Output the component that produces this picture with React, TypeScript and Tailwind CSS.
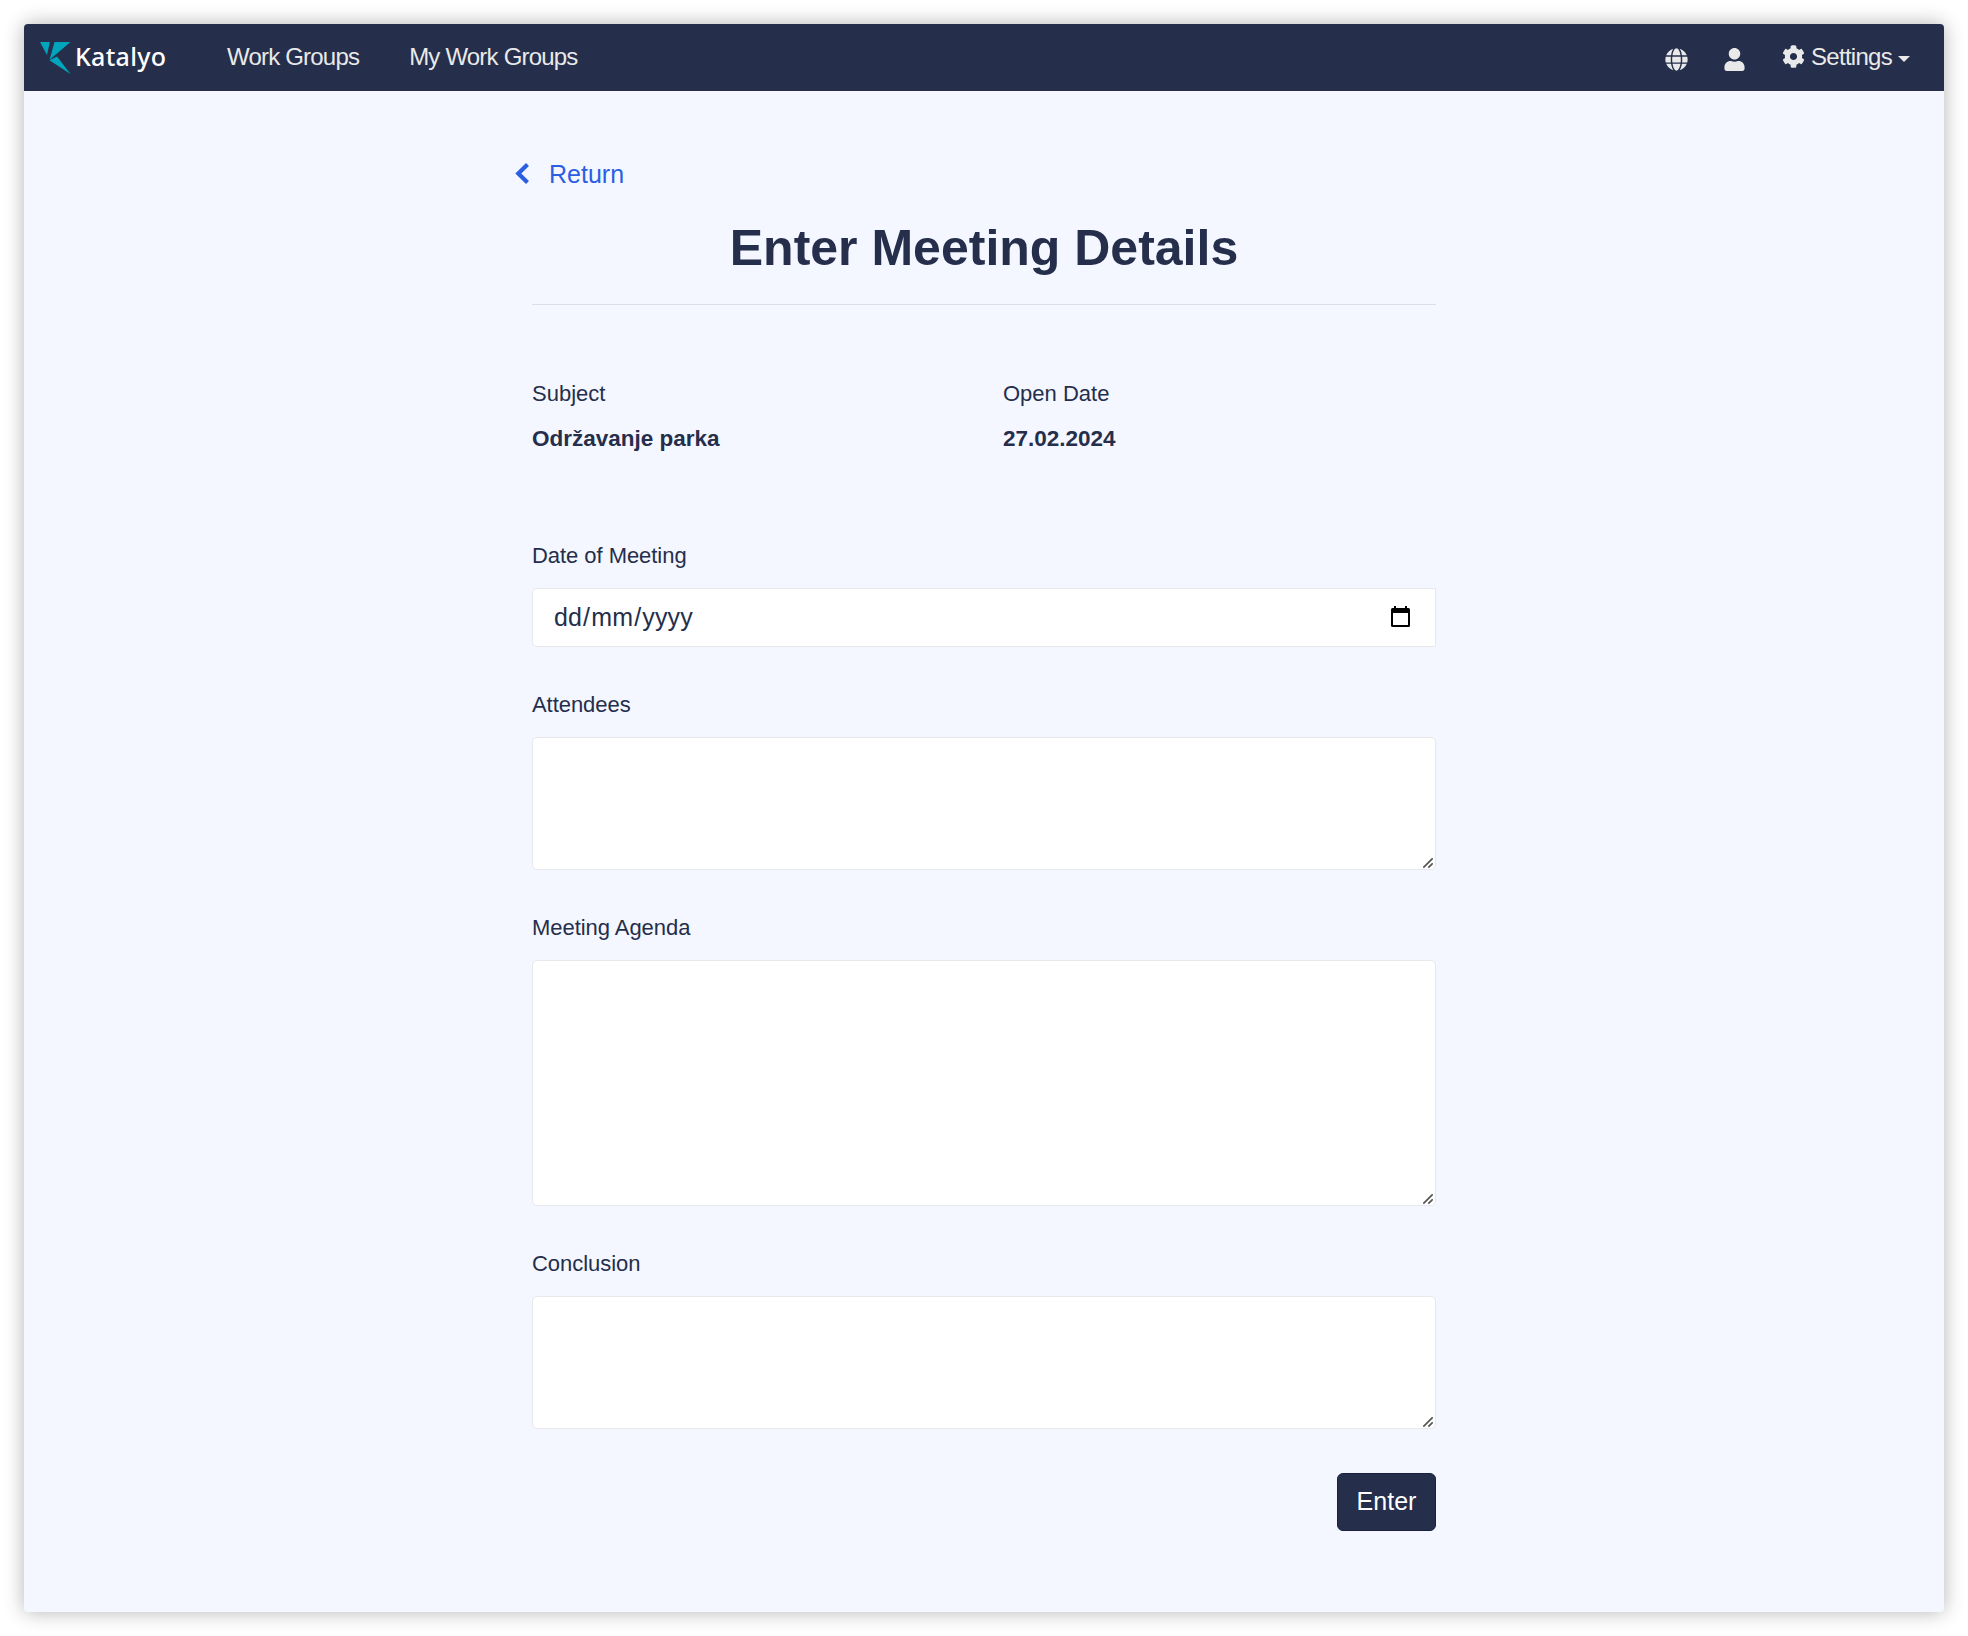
import React from "react";
import { FaGlobe, FaUser, FaCog } from "react-icons/fa";

function Grip() {
  return (
    <svg className="pointer-events-none absolute right-[3px] bottom-[2px] h-[10px] w-[10px]" viewBox="0 0 10 10" fill="none" stroke="#555" strokeWidth="1.7">
      <path d="M0.3 9.7 L9.7 0.3 M5.3 9.7 L9.7 5.3" />
    </svg>
  );
}

function Label({ children }: { children: React.ReactNode }) {
  return <label className="block text-[22px] leading-[33px] tracking-[-0.05px]">{children}</label>;
}

function AreaField({ label, size }: { label: string; size: string }) {
  return (
    <div className="flex flex-col gap-4">
      <Label>{label}</Label>
      <div className="relative flex">
        <textarea aria-label={label} className={`w-full resize-none rounded-[5px] border border-[#e7e8ec] bg-white outline-none ${size}`} />
        <Grip />
      </div>
    </div>
  );
}

function Logo() {
  return (
    <div className="flex items-center">
      <svg className="h-8 w-[31px]" viewBox="0 0 31 32" fill="#00a5bd">
        <path d="M0 0H9.8L7 13Z" />
        <path d="M14.5 0H30.5L9.600 17.800Z" />
        <path d="M9.400 18.200L17 14.600L30.500 32Z" />
      </svg>
      <span className="mb-1 ml-[4px] font-['Noto_Sans'] text-[25px] leading-8 font-medium tracking-[0.3px] text-white">Katalyo</span>
    </div>
  );
}

export default function App() {
  return (
    <div className="h-[1636px] bg-white p-6 font-['Liberation_Sans',Arial,sans-serif] text-[#252e4b]">
      <div className="flex h-[1588px] flex-col overflow-hidden rounded-[4px] bg-[#f4f7ff] shadow-[0_0_20px_rgba(0,0,0,0.3)]">
        <nav className="flex h-[67px] shrink-0 items-center bg-[#252e4b] pr-[34px] pl-4 text-[24px] tracking-[-0.8px] text-[#e9e9e9]">
          <div className="w-[187px]"><Logo /></div>
          <a className="mb-[2px]">Work Groups</a>
          <a className="mb-[2px] ml-[50px]">My Work Groups</a>
          <div className="ml-auto flex items-center">
            <FaGlobe className="mt-[3px] h-[23px] w-[23px]" />
            <FaUser className="mt-[3px] ml-[36px] h-[23px] w-[21px]" />
            <FaCog className="mb-[2px] ml-[37px] h-[23px] w-[23px]" />
            <span className="mb-[2px] ml-[6px] tracking-[-0.72px]">Settings</span>
            <span className="mt-[2px] ml-[6px] border-x-[6px] border-t-[6px] border-x-transparent border-t-[#e9e9e9]" />
          </div>
        </nav>
        <main className="mx-auto w-[904px]">
          <a className="mt-[64px] -ml-[17px] flex h-[38px] items-center text-[25px] leading-[38px] text-[#2b5fe3]">
            <svg className="mr-[20px] mb-[2px] h-[21px] w-[14px]" viewBox="0 0 14 21" fill="none" stroke="currentColor" strokeWidth="4.2">
              <path d="M12.500 1.500L3.300 10.500L12.500 19.500" />
            </svg>
            Return
          </a>
          <h1 className="mt-[25px] h-[60px] text-center text-[50px] leading-[60px] font-bold">Enter Meeting Details</h1>
          <hr className="mt-[26px] border-[#dadee7]" />
          <div className="mt-[72px] grid grid-cols-[471px_1fr] text-[22px] leading-[33px]">
            <div>
              <div>Subject</div>
              <div className="mt-[12px] mb-px text-[22.5px] font-bold">Održavanje parka</div>
            </div>
            <div>
              <div>Open Date</div>
              <div className="mt-[12px] mb-px text-[22.5px] font-bold">27.02.2024</div>
            </div>
          </div>
          <form className="mt-[83px] flex flex-col gap-[41px]">
            <div className="flex flex-col gap-4">
              <Label>Date of Meeting</Label>
              <div className="flex h-[59px] items-center justify-between rounded-l-[5px] border border-[#e7e8ec] bg-white pr-[24px] pl-[20px] text-[25px]">
                <div className="flex tracking-[0.15px]">
                  <span className="px-px">dd</span>/<span className="px-px">mm</span>/<span className="px-px">yyyy</span>
                </div>
                <svg className="mb-[2px] h-[21px] w-[21px]" viewBox="0 0 21 21">
                  <path fill="#000" d="M4 0h2v2h9V0h2v2h1.500a1.500 1.500 0 0 1 1.500 1.500v16a1.500 1.500 0 0 1-1.500 1.500h-16a1.500 1.500 0 0 1-1.500-1.500v-16A1.500 1.500 0 0 1 2.500 2H4zM3 7v12h15V7z" />
                </svg>
              </div>
            </div>
            <AreaField label="Attendees" size="h-[133px]" />
            <AreaField label="Meeting Agenda" size="h-[246px]" />
            <AreaField label="Conclusion" size="h-[133px]" />
          </form>
          <div className="mt-[44px] flex justify-end">
            <button className="h-[58px] w-[99px] rounded-[6px] border border-[#18213f] bg-[#252e4b] text-[25px] text-white">Enter</button>
          </div>
        </main>
      </div>
    </div>
  );
}
